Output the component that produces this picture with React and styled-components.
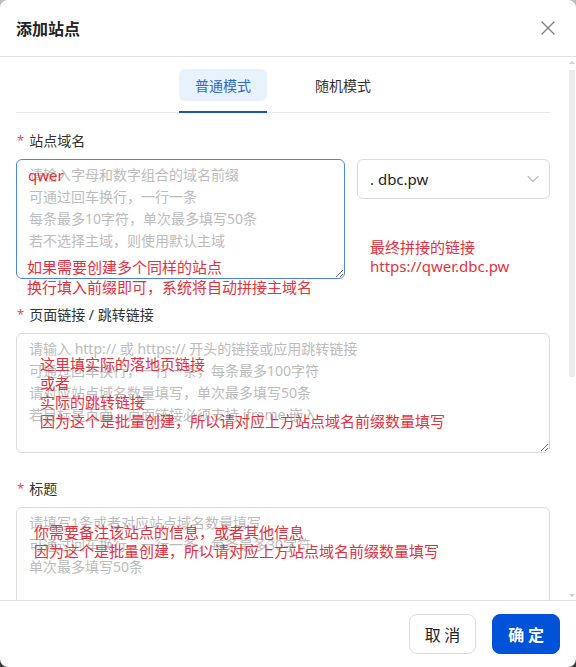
import React from "react";
import styled, { createGlobalStyle } from "styled-components";

const GlobalStyle = createGlobalStyle`
  * { box-sizing: border-box; }
  html, body { margin: 0; padding: 0; height: 100%; }
  body {
    background: linear-gradient(#bdbdbd, #3a3a3a);
    font-family: "Noto Sans", "Noto Sans CJK SC", sans-serif;
    color: #333;
  }
  #root { height: 100%; }
`;

const Modal = styled.div`
  height: 100vh;
  background: #fff;
  border-radius: 8px;
  overflow: hidden;
  display: flex;
  flex-direction: column;
`;

const Header = styled.header`
  flex: none;
  height: 57px;
  display: flex;
  align-items: center;
  justify-content: space-between;
  padding: 0 16px;
  border-bottom: 1px solid #e2e2e2;
`;

const Title = styled.h1`
  margin: 0;
  font-size: 16px;
  font-weight: 700;
  color: #222;
  font-family: "Noto Sans CJK SC", sans-serif;
`;

const CloseButton = styled.button`
  width: 24px;
  height: 24px;
  padding: 0;
  border: none;
  background: none;
  display: flex;
  align-items: center;
  justify-content: center;
  cursor: pointer;
`;

const BodyWrap = styled.div`
  position: relative;
  flex: 1;
  min-height: 0;
`;

const Body = styled.div`
  height: 100%;
  overflow: hidden;
  padding: 0 26px 0 16px;
`;

const ScrollBar = styled.div`
  position: absolute;
  top: 0;
  right: 0;
  bottom: 0;
  width: 8px;
  display: flex;
  flex-direction: column;
  align-items: stretch;
  background: #fff;
`;

const ScrollArrow = styled.div`
  flex: none;
  height: 10px;
  display: flex;
  align-items: center;
  justify-content: center;

  &::before {
    content: "";
    width: 0;
    height: 0;
    border-left: 3px solid transparent;
    border-right: 3px solid transparent;
    ${(p) =>
      p.$down
        ? "border-top: 3px solid #cfcfcf;"
        : "border-bottom: 3px solid #cfcfcf;"}
  }
`;

const ScrollTrack = styled.div`
  flex: 1;
  padding: 3px 1px 0;
`;

const ScrollThumb = styled.div`
  height: 307px;
  background: #ececec;
  border-radius: 1px;
`;

const TabNav = styled.nav`
  display: flex;
  justify-content: center;
  gap: 32px;
  padding-top: 12px;
  border-bottom: 1px solid #e8e8e8;
`;

const Tab = styled.div`
  position: relative;
  padding-bottom: 11px;
  cursor: pointer;

  &::after {
    content: "";
    position: absolute;
    left: 0;
    right: 0;
    bottom: -1px;
    height: 2px;
    background: ${(p) => (p.$active ? "#1a55b3" : "transparent")};
  }
`;

const TabLabel = styled.span`
  display: flex;
  align-items: center;
  height: 32px;
  padding: 0 16px;
  border-radius: 6px;
  font-size: 14px;
  color: ${(p) => (p.$active ? "#2f6bcc" : "#333")};
  background: ${(p) => (p.$active ? "#e7f2fd" : "transparent")};
`;

const Form = styled.form`
  display: flex;
  flex-direction: column;
  gap: 24px;
  padding: 16px 0 40px;
`;

const Field = styled.div`
  display: flex;
  flex-direction: column;
`;

const Label = styled.label`
  display: flex;
  align-items: center;
  gap: 5px;
  height: 22px;
  margin-bottom: 8px;
  padding-left: 1px;
  font-size: 14px;
  color: #333;
`;

const Required = styled.span`
  color: #e34d59;
  font-size: 13px;
`;

const DomainRow = styled.div`
  display: grid;
  grid-template-columns: 1fr 193px;
  gap: 12px;
  align-items: start;
`;

const InputWrap = styled.div`
  position: relative;
`;

const TextArea = styled.textarea`
  display: block;
  width: 100%;
  height: 120px;
  margin: 0;
  padding: 4px 12px;
  border: 1px solid ${(p) => (p.$focused ? "#4a86de" : "#dcdcdc")};
  border-radius: 6px;
  font-family: "Noto Sans", "Noto Sans CJK SC", sans-serif;
  font-size: 14px;
  line-height: 22px;
  color: #333;
  resize: vertical;
  outline: none;
  background: #fff;

  &::placeholder {
    color: #bcbcbc;
  }
`;

const Annotation = styled.div`
  position: absolute;
  left: ${(p) => p.$left}px;
  top: ${(p) => p.$top}px;
  color: #e5323e;
  font-size: 15px;
  line-height: ${(p) => p.$lh || 19}px;
  white-space: pre;
  pointer-events: none;
`;

const SideColumn = styled.div`
  display: flex;
  flex-direction: column;
`;

const Select = styled.div`
  height: 40px;
  display: flex;
  align-items: center;
  justify-content: space-between;
  padding: 0 10px 0 12px;
  border: 1px solid #dcdcdc;
  border-radius: 6px;
  font-size: 15px;
  color: #1f1f1f;
  cursor: pointer;
`;

const SideNote = styled.div`
  margin-top: 39px;
  padding-left: 13px;
  color: #e5323e;
  font-size: 15px;
  line-height: 19px;
`;

const Footer = styled.footer`
  flex: none;
  display: flex;
  justify-content: flex-end;
  gap: 16px;
  padding: 13px 16px;
  border-top: 1px solid #e2e2e2;
`;

const Button = styled.button`
  height: 40px;
  padding: 0 15px;
  border-radius: 8px;
  font-family: "Noto Sans CJK SC", sans-serif;
  font-size: 16px;
  font-weight: ${(p) => (p.$primary ? 700 : 400)};
  color: ${(p) => (p.$primary ? "#fff" : "#222")};
  background: ${(p) => (p.$primary ? "#0052d9" : "#fff")};
  border: 1px solid ${(p) => (p.$primary ? "#0052d9" : "#dcdcdc")};
  cursor: pointer;
`;

const CloseIcon = () => (
  <svg width="14" height="14" viewBox="0 0 14 14" fill="none">
    <path d="M1 1L13 13M13 1L1 13" stroke="#7d7d7d" strokeWidth="1.3" strokeLinecap="round" />
  </svg>
);

const ChevronIcon = () => (
  <svg width="12" height="8" viewBox="0 0 12 8" fill="none">
    <path d="M1 1.5L6 6.5L11 1.5" stroke="#bdbdbd" strokeWidth="1.2" strokeLinecap="round" strokeLinejoin="round" />
  </svg>
);

const domainPlaceholder =
  "请输入字母和数字组合的域名前缀\n可通过回车换行，一行一条\n每条最多10字符，单次最多填写50条\n若不选择主域，则使用默认主域";
const linkPlaceholder =
  "请输入 http:// 或 https:// 开头的链接或应用跳转链接\n可通过回车换行，一行一条，每条最多100字符\n请对应站点域名数量填写，单次最多填写50条\n若目标是页面，页面链接必须支持 iframe 嵌入";
const titlePlaceholder =
  "请填写1条或者对应站点域名数量填写\n可通过回车换行，一行一条，每条最多30字符\n单次最多填写50条";

export default function App() {
  return (
    <>
      <GlobalStyle />
      <Modal>
        <Header>
          <Title>添加站点</Title>
          <CloseButton aria-label="关闭">
            <CloseIcon />
          </CloseButton>
        </Header>
        <BodyWrap>
          <Body>
            <TabNav>
              <Tab $active>
                <TabLabel $active>普通模式</TabLabel>
              </Tab>
              <Tab>
                <TabLabel>随机模式</TabLabel>
              </Tab>
            </TabNav>
            <Form onSubmit={(e) => e.preventDefault()}>
              <Field>
                <Label>
                  <Required>*</Required>站点域名
                </Label>
                <DomainRow>
                  <InputWrap>
                    <TextArea $focused placeholder={domainPlaceholder} />
                    <Annotation $left={12} $top={6} $lh={20}>qwer</Annotation>
                    <Annotation $left={11} $top={98} $lh={20}>
                      {"如果需要创建多个同样的站点\n换行填入前缀即可，系统将自动拼接主域名"}
                    </Annotation>
                  </InputWrap>
                  <SideColumn>
                    <Select>
                      <span>. dbc.pw</span>
                      <ChevronIcon />
                    </Select>
                    <SideNote>
                      最终拼接的链接
                      <br />
                      https://qwer.dbc.pw
                    </SideNote>
                  </SideColumn>
                </DomainRow>
              </Field>

              <Field>
                <Label>
                  <Required>*</Required>页面链接 / 跳转链接
                </Label>
                <InputWrap>
                  <TextArea placeholder={linkPlaceholder} />
                  <Annotation $left={24} $top={22}>
                    {"这里填实际的落地页链接\n或者\n实际的跳转链接\n因为这个是批量创建，所以请对应上方站点域名前缀数量填写"}
                  </Annotation>
                </InputWrap>
              </Field>

              <Field>
                <Label>
                  <Required>*</Required>标题
                </Label>
                <InputWrap>
                  <TextArea placeholder={titlePlaceholder} />
                  <Annotation $left={18} $top={16}>
                    {"你需要备注该站点的信息，或者其他信息\n因为这个是批量创建，所以请对应上方站点域名前缀数量填写"}
                  </Annotation>
                </InputWrap>
              </Field>
            </Form>
          </Body>
          <ScrollBar aria-hidden="true">
            <ScrollArrow />
            <ScrollTrack>
              <ScrollThumb />
            </ScrollTrack>
            <ScrollArrow $down />
          </ScrollBar>
        </BodyWrap>
        <Footer>
          <Button>取 消</Button>
          <Button $primary>确 定</Button>
        </Footer>
      </Modal>
    </>
  );
}
